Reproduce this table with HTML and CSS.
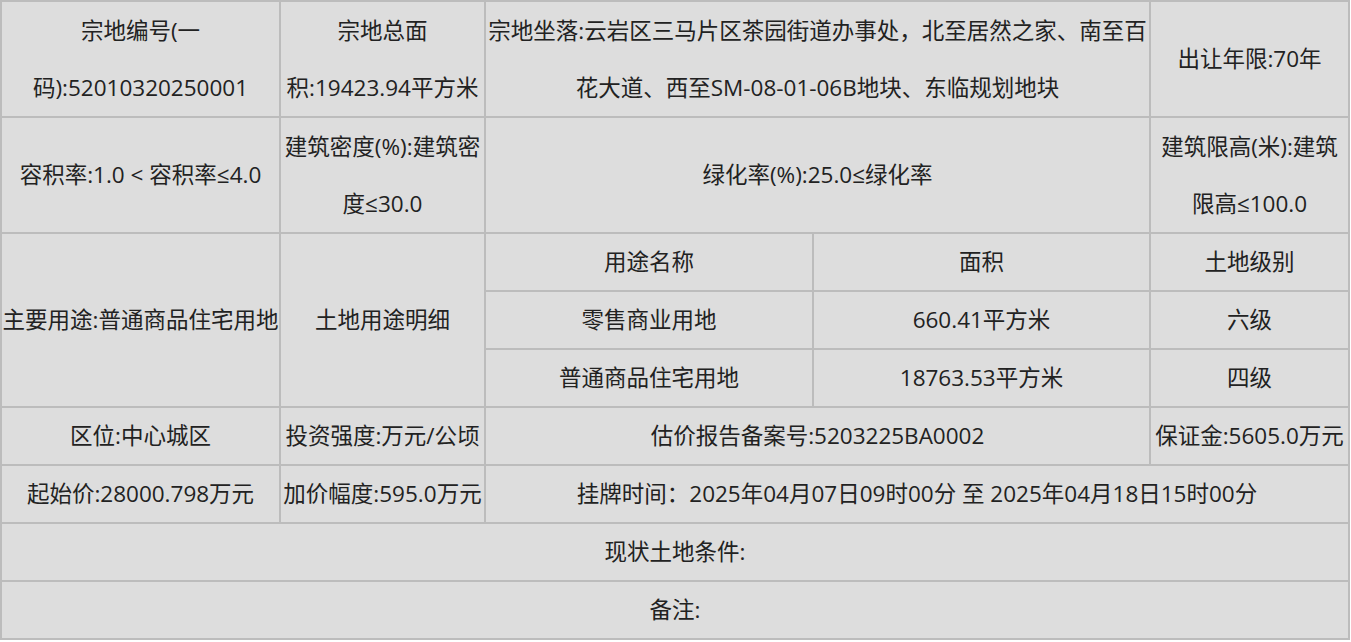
FILE: index.html
```html
<!DOCTYPE html>
<html lang="zh-CN">
<head>
<meta charset="utf-8">
<title>宗地信息</title>
<link rel="stylesheet" href="styles.css">
</head>
<body>
<table class="land">
  <colgroup>
    <col class="c1"><col class="c2"><col class="c3"><col class="c4"><col class="c5">
  </colgroup>
  <tbody>
    <tr>
      <td class="tall">宗地编号(一码):52010320250001</td>
      <td class="tall">宗地总面积:19423.94平方米</td>
      <td class="tall" colspan="2">宗地坐落:云岩区三马片区茶园街道办事处，北至居然之家、南至百花大道、西至SM-08-01-06B地块、东临规划地块</td>
      <td>出让年限:70年</td>
    </tr>
    <tr>
      <td>容积率:1.0 &lt; 容积率≤4.0</td>
      <td class="tall">建筑密度(%):建筑密度≤30.0</td>
      <td colspan="2">绿化率(%):25.0≤绿化率</td>
      <td class="tall">建筑限高(米):建筑限高≤100.0</td>
    </tr>
    <tr>
      <td rowspan="3">主要用途:普通商品住宅用地</td>
      <td rowspan="3">土地用途明细</td>
      <td>用途名称</td>
      <td>面积</td>
      <td>土地级别</td>
    </tr>
    <tr>
      <td>零售商业用地</td>
      <td>660.41平方米</td>
      <td>六级</td>
    </tr>
    <tr>
      <td>普通商品住宅用地</td>
      <td>18763.53平方米</td>
      <td>四级</td>
    </tr>
    <tr>
      <td>区位:中心城区</td>
      <td>投资强度:万元/公顷</td>
      <td colspan="2">估价报告备案号:5203225BA0002</td>
      <td>保证金:5605.0万元</td>
    </tr>
    <tr>
      <td>起始价:28000.798万元</td>
      <td>加价幅度:595.0万元</td>
      <td colspan="3">挂牌时间：2025年04月07日09时00分 至 2025年04月18日15时00分</td>
    </tr>
    <tr>
      <td colspan="5">现状土地条件:</td>
    </tr>
    <tr>
      <td colspan="5">备注:</td>
    </tr>
  </tbody>
</table>
</body>
</html>
```

FILE: styles.css
```css
html, body {
  margin: 0;
  padding: 0;
  background: #ffffff;
}

.land {
  width: 1350px;
  table-layout: fixed;
  border-collapse: separate;
  border-spacing: 0;
  border: 1px solid #bcbcbc;
  background: #dddddd;
  font-family: "Open Sans", "Noto Sans CJK SC", sans-serif;
  font-size: 22.5px;
  color: #222222;
}

.c1 { width: 279px; }
.c2 { width: 205px; }
.c3 { width: 328px; }
.c4 { width: 337px; }
.c5 { width: 199px; }

.land td {
  border: 1px solid #bcbcbc;
  padding: 0;
  height: 56px;
  line-height: 56px;
  text-align: center;
  vertical-align: middle;
  word-break: normal;
}

.land td.tall {
  line-height: 57px;
}
```
